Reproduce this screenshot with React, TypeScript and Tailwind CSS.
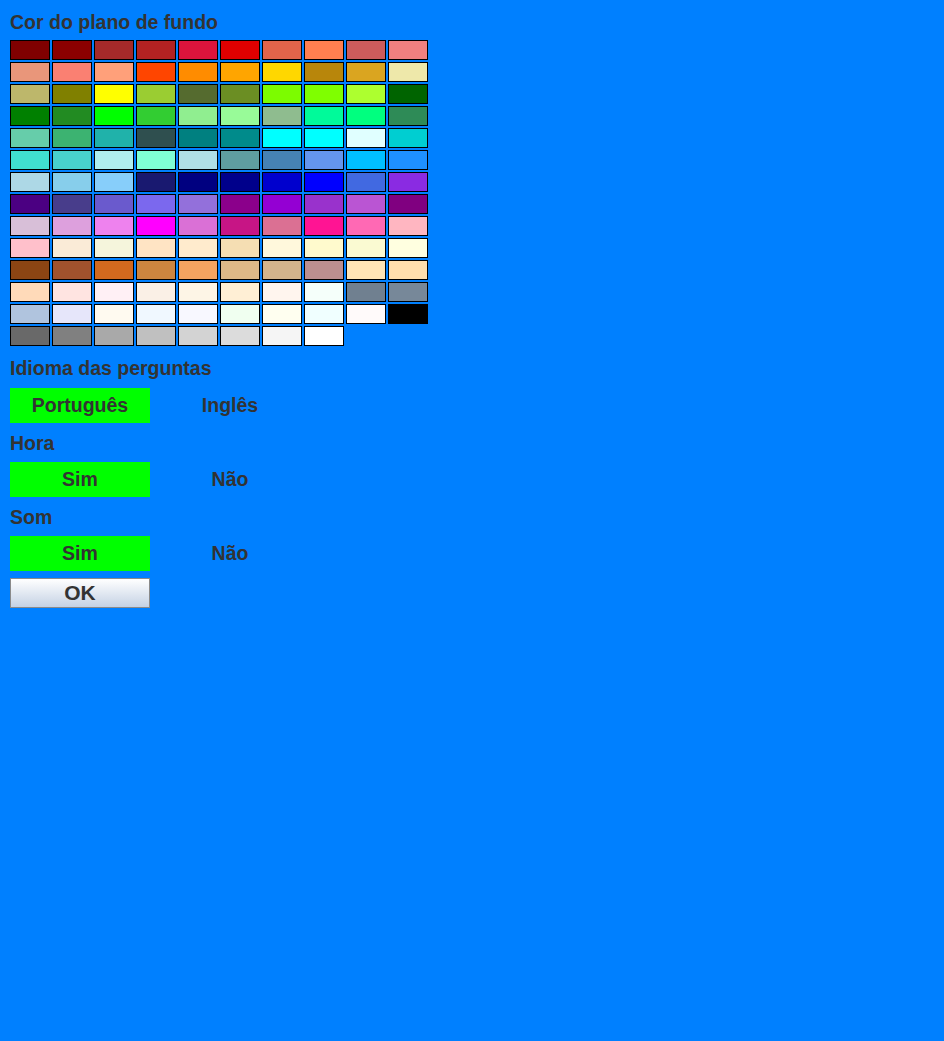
import React from 'react';

const colors: string[] = [
  '#800000', '#8B0000', '#A52A2A', '#B22222', '#DC143C', '#E00000', '#E2644A', '#FF7F50', '#CD5C5C', '#F08080',
  '#E9967A', '#FA8072', '#FFA07A', '#FF4500', '#FF8C00', '#FFA500', '#FFD700', '#B8860B', '#DAA520', '#EEE8AA',
  '#BDB76B', '#808000', '#FFFF00', '#9ACD32', '#556B2F', '#6B8E23', '#7CFC00', '#7FFF00', '#ADFF2F', '#006400',
  '#008000', '#228B22', '#00FF00', '#32CD32', '#90EE90', '#98FB98', '#8FBC8F', '#00FA9A', '#00FF7F', '#2E8B57',
  '#66CDAA', '#3CB371', '#20B2AA', '#2F4F4F', '#008080', '#008B8B', '#00FFFF', '#00FFFF', '#E0FFFF', '#00CED1',
  '#40E0D0', '#48D1CC', '#AFEEEE', '#7FFFD4', '#B0E0E6', '#5F9EA0', '#4682B4', '#6495ED', '#00BFFF', '#1E90FF',
  '#ADD8E6', '#87CEEB', '#87CEFA', '#191970', '#000080', '#00008B', '#0000CD', '#0000FF', '#4169E1', '#8A2BE2',
  '#4B0082', '#483D8B', '#6A5ACD', '#7B68EE', '#9370DB', '#8B008B', '#9400D3', '#9932CC', '#BA55D3', '#800080',
  '#D8BFD8', '#DDA0DD', '#EE82EE', '#FF00FF', '#DA70D6', '#C71585', '#DB7093', '#FF1493', '#FF69B4', '#FFB6C1',
  '#FFC0CB', '#FAEBD7', '#F5F5DC', '#FFE4C4', '#FFEBCD', '#F5DEB3', '#FFF8DC', '#FFFACD', '#FAFAD2', '#FFFFE0',
  '#8B4513', '#A0522D', '#D2691E', '#CD853F', '#F4A460', '#DEB887', '#D2B48C', '#BC8F8F', '#FFE4B5', '#FFDEAD',
  '#FFDAB9', '#FFE4E1', '#FFF0F5', '#FAF0E6', '#FDF5E6', '#FFEFD5', '#FFF5EE', '#F5FFFA', '#708090', '#778899',
  '#B0C4DE', '#E6E6FA', '#FFFAF0', '#F0F8FF', '#F8F8FF', '#F0FFF0', '#FFFFF0', '#F0FFFF', '#FFFAFA', '#000000',
  '#696969', '#808080', '#A9A9A9', '#C0C0C0', '#D3D3D3', '#DCDCDC', '#F5F5F5', '#FFFFFF',
];

const Label: React.FC<{ text: string; h: string }> = ({ text, h }) => (
  <div className={`flex items-center ${h}`}>{text}</div>
);

const Choice: React.FC<{ left: string; right: string }> = ({ left, right }) => (
  <div className="flex gap-[10px] h-[35px]">
    <button className="w-[140px] h-full bg-[#00FF00] font-bold">{left}</button>
    <button className="w-[140px] h-full font-bold">{right}</button>
  </div>
);

export default function App() {
  return (
    <div
      className="min-h-[1041px] bg-[#0080FF] pl-[10px] text-[#333333] text-[19.5px] font-bold"
      style={{ fontFamily: '"Liberation Sans", Arial, sans-serif' }}
    >
      <Label text="Cor do plano de fundo" h="h-[40px] pt-[6px]" />
      <div className="grid grid-cols-[repeat(10,40px)] gap-[2px]">
        {colors.map((c, i) => (
          <div key={i} className="h-[20px] border border-black" style={{ backgroundColor: c }} />
        ))}
      </div>
      <Label text="Idioma das perguntas" h="h-[42px] pt-[4px]" />
      <Choice left="Português" right="Inglês" />
      <Label text="Hora" h="h-[39px] pt-[2px]" />
      <Choice left="Sim" right="Não" />
      <Label text="Som" h="h-[39px] pt-[2px]" />
      <Choice left="Sim" right="Não" />
      <button className="mt-[7px] w-[140px] h-[30px] border border-[#8a8a8a] bg-gradient-to-b from-white to-[#c5d2e4] text-[21px] font-bold leading-none pb-[2px]">
        OK
      </button>
    </div>
  );
}
